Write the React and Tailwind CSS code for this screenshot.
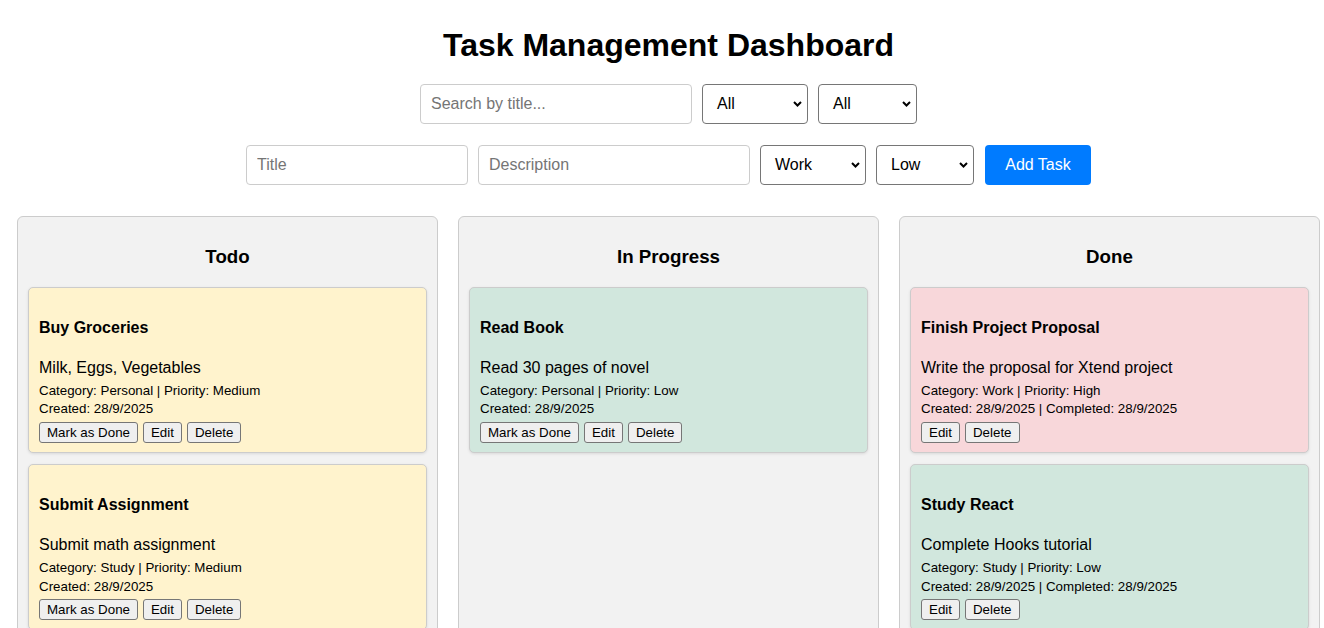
import React from "react";

const FONT = { fontFamily: '"Liberation Sans", Arial, sans-serif' };

function Chevron() {
  return (
    <svg width="9" height="6" viewBox="0 0 9 6" className="pointer-events-none absolute right-[6px] top-1/2 -translate-y-1/2">
      <path d="M1 1 L4.5 4.5 L8 1" fill="none" stroke="#000" strokeWidth="2" />
    </svg>
  );
}

function Select({ value, w }) {
  return (
    <div className={`relative h-[40px] ${w}`}>
      <div className="flex h-full w-full items-center rounded-[4px] border border-[#767676] bg-white pl-[14px] text-[16px] text-black">
        {value}
      </div>
      <Chevron />
    </div>
  );
}

function Input({ placeholder, w }) {
  return (
    <input
      placeholder={placeholder}
      className={`h-[40px] ${w} rounded-[4px] border border-[#cccccc] bg-white px-[10px] text-[16px] text-black placeholder:text-[#757575] outline-none`}
    />
  );
}

function Btn({ children }) {
  return (
    <button className="rounded-[3px] border border-[#767676] bg-[#efefef] px-[7px] py-[2px] text-[13.33px] leading-[15px] text-black">
      {children}
    </button>
  );
}

function Card({ t }) {
  return (
    <div
      className={`mb-[11px] rounded-[5px] border border-[#cccccc] px-[10px] pt-[10px] pb-[9px] shadow-[0_1px_3px_rgba(0,0,0,0.1)] ${t.bg}`}
    >
      <h4 className="mt-[21.3px] mb-[21.3px] text-[16px] font-bold leading-[1.15] text-black">{t.title}</h4>
      <p className="mb-[4px] text-[16px] leading-[1.15] text-black">{t.desc}</p>
      <p className="mb-[4px] text-[16px] leading-[1.15] text-black">
        <span className="text-[13.33px]">
          Category: {t.cat} | Priority: {t.pri}
        </span>
        <br />
        <span className="text-[13.33px]">
          Created: 28/9/2025{t.done ? " | Completed: 28/9/2025" : ""}
        </span>
      </p>
      <div className="flex gap-[5px]">
        {!t.done && <Btn>Mark as Done</Btn>}
        <Btn>Edit</Btn>
        <Btn>Delete</Btn>
      </div>
    </div>
  );
}

const YELLOW = "bg-[#fff3cd]";
const GREEN = "bg-[#d1e7dd]";
const RED = "bg-[#f8d7da]";

const columns = [
  {
    name: "Todo",
    tasks: [
      { title: "Buy Groceries", desc: "Milk, Eggs, Vegetables", cat: "Personal", pri: "Medium", bg: YELLOW },
      { title: "Submit Assignment", desc: "Submit math assignment", cat: "Study", pri: "Medium", bg: YELLOW },
    ],
  },
  {
    name: "In Progress",
    tasks: [{ title: "Read Book", desc: "Read 30 pages of novel", cat: "Personal", pri: "Low", bg: GREEN }],
  },
  {
    name: "Done",
    tasks: [
      { title: "Finish Project Proposal", desc: "Write the proposal for Xtend project", cat: "Work", pri: "High", bg: RED, done: true },
      { title: "Study React", desc: "Complete Hooks tutorial", cat: "Study", pri: "Low", bg: GREEN, done: true },
    ],
  },
];

export default function App() {
  return (
    <div className="h-[628px] w-[1324px] overflow-hidden bg-white text-black" style={FONT}>
      <div className="pl-[17px] pr-[4px] pt-[27px]">
        <h1 className="text-center text-[32px] font-bold leading-[36.8px]">Task Management Dashboard</h1>
        <div className="mt-[20px] flex justify-center gap-[10px]">
          <Input placeholder="Search by title..." w="w-[272px]" />
          <Select value="All" w="w-[106px]" />
          <Select value="All" w="w-[99px]" />
        </div>
        <div className="mt-[21px] flex justify-center gap-[10px]">
          <Input placeholder="Title" w="w-[222px]" />
          <Input placeholder="Description" w="w-[272px]" />
          <Select value="Work" w="w-[106px]" />
          <Select value="Low" w="w-[98px]" />
          <button className="ml-[1px] h-[40px] w-[106px] rounded-[4px] bg-[#007bff] text-[16px] text-white">Add Task</button>
        </div>
        <div className="mt-[31px] flex gap-[20px]">
          {columns.map((c) => (
            <div key={c.name} className="min-h-[500px] flex-1 rounded-[6px] border border-[#cccccc] bg-[#f2f2f2] p-[10px]">
              <h3 className="mt-[18.72px] mb-[19.7px] text-center text-[18.72px] font-bold leading-[1.15]">{c.name}</h3>
              {c.tasks.map((t) => (
                <Card key={t.title} t={t} />
              ))}
            </div>
          ))}
        </div>
      </div>
    </div>
  );
}
